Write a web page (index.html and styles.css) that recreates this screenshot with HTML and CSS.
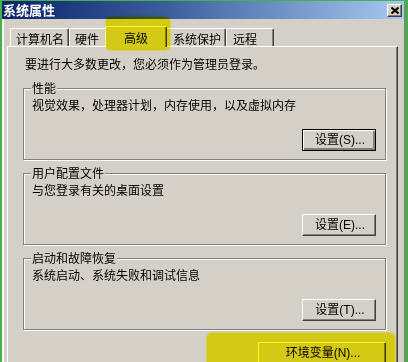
FILE: index.html
```html
<!DOCTYPE html>
<html lang="zh-CN">
<head>
<meta charset="utf-8">
<title>系统属性</title>
<link rel="stylesheet" href="styles.css">
</head>
<body>
<div class="frame">
  <div class="window">
    <div class="titlebar">
      <span class="title">系统属性</span>
      <span class="close"><svg width="8" height="7" viewBox="0 0 8 7"><path d="M0.5 0.5 L7.5 6.5 M7.5 0.5 L0.5 6.5" stroke="#000" stroke-width="2" fill="none"/></svg></span>
    </div>
    <div class="body">
      <div class="tabs">
        <div class="tab t1">计算机名</div>
        <div class="tab t2">硬件</div>
        <div class="tab sel">高级</div>
        <div class="tab t3">系统保护</div>
        <div class="tab t4">远程</div>
      </div>
      <div class="panel">
        <p class="note">要进行大多数更改，您必须作为管理员登录。</p>
        <div class="group">
          <div class="group-label">性能</div>
          <p class="desc">视觉效果，处理器计划，内存使用，以及虚拟内存</p>
          <div class="actions"><button class="btn focus">设置(S)...</button></div>
        </div>
        <div class="group">
          <div class="group-label">用户配置文件</div>
          <p class="desc">与您登录有关的桌面设置</p>
          <div class="actions"><button class="btn">设置(E)...</button></div>
        </div>
        <div class="group">
          <div class="group-label">启动和故障恢复</div>
          <p class="desc">系统启动、系统失败和调试信息</p>
          <div class="actions"><button class="btn">设置(T)...</button></div>
        </div>
        <div class="env-row"><button class="btn env">环境变量(N)...</button></div>
      </div>
    </div>
  </div>
  <div class="hl hl-tab"></div>
  <div class="hl hl-env"></div>
</div>
</body>
</html>
```

FILE: styles.css
```css
* { box-sizing: border-box; }
html, body { margin: 0; padding: 0; }
body {
  font-family: "Liberation Sans", "Noto Sans CJK SC", sans-serif;
  font-size: 12px;
  line-height: 14px;
  color: #000;
  background: #46b04c;
}
.frame {
  position: relative;
  width: 408px;
  height: 362px;
  overflow: hidden;
  padding: 1px 3px 0 2px;
  background: #46b04c;
  isolation: isolate;
}
.window {
  height: 100%;
  background: #d4d0c8;
  border-right: 1px solid #808080;
  display: flex;
  flex-direction: column;
}
.titlebar {
  height: 18px;
  flex: none;
  display: flex;
  align-items: center;
  justify-content: space-between;
  padding: 0 2px 0 1px;
  background: linear-gradient(to right, #0a246a 0%, #3a5c9c 40%, #a6caf0 100%);
}
.title {
  color: #fff;
  font-family: "Noto Sans CJK SC", sans-serif;
  font-weight: bold;
  font-size: 13px;
  line-height: 16px;
}
.close {
  width: 15px;
  height: 13px;
  display: flex;
  align-items: center;
  justify-content: center;
  background: #d4d0c8;
  border: 1px solid;
  border-color: #fff #404040 #404040 #fff;
  box-shadow: inset -1px -1px 0 #808080;
}
.body {
  flex: 1;
  border-left: 2px solid #fff;
  padding: 7px 6px 0 3px;
  overflow: hidden;
}
.tabs {
  display: flex;
  align-items: flex-end;
  height: 20px;
  padding-left: 3px;
  position: relative;
  z-index: 1;
}
.tab {
  height: 18px;
  padding: 3px 0 0 5px;
  border-top: 1px solid #fff;
  border-left: 1px solid #fff;
  border-right: 1px solid #404040;
  box-shadow: inset -1px 0 0 #808080;
  border-radius: 2px 2px 0 0;
  background: #d4d0c8;
  white-space: nowrap;
  font-family: "Noto Sans CJK SC", sans-serif;
}
.t1 { width: 59px; }
.t2 { width: 38px; }
.t3 { width: 61px; padding-left: 7px; }
.t4 { width: 48px; padding-left: 6px; }
.sel {
  width: 62px;
  height: 21px;
  margin: 0 -2px -1px;
  padding: 4px 0 0 0;
  text-align: center;
  position: relative;
  z-index: 2;
}
.panel {
  height: 400px;
  border: 1px solid;
  border-color: #fff #404040 #404040 #fff;
  box-shadow: inset -1px 0 0 #808080;
  padding: 10px 11px 0 15px;
}
p { margin: 0; }
.note {
  margin-left: 2px;
  font-family: "Noto Sans CJK SC", sans-serif;
}
.group {
  margin-top: 17px;
  border: 1px solid #808080;
  box-shadow: 1px 1px 0 #fff, inset 1px 1px 0 #fff;
  padding: 0 9px 8px 8px;
}
.group + .group { margin-top: 13px; }
.group-label {
  width: max-content;
  margin: -8px 0 0 -1px;
  padding: 0 1px;
  background: #d4d0c8;
  font-family: "Noto Sans CJK SC", sans-serif;
}
.desc {
  margin-top: 3px;
  font-family: "Noto Sans CJK SC", sans-serif;
}
.actions {
  display: flex;
  justify-content: flex-end;
  margin-top: 17px;
}
.btn {
  width: 74px;
  height: 22px;
  margin: 0;
  padding: 0 0 0 2px;
  font: inherit;
  font-size: 12px;
  color: #000;
  background: #d4d0c8;
  border: 1px solid;
  border-color: #fff #404040 #404040 #fff;
  box-shadow: inset -1px -1px 0 #808080;
  white-space: nowrap;
}
.btn.focus {
  border-color: #000;
  box-shadow: inset 1px 1px 0 #fff, inset -2px -2px 0 #808080;
}
.env-row {
  display: flex;
  justify-content: flex-end;
  margin-top: 12px;
}
.btn.env { width: 128px; }
.hl {
  position: absolute;
  z-index: 10;
  background: #fff81c;
  mix-blend-mode: multiply;
  border-radius: 5px;
  box-shadow: 0 0 2px 1px rgba(255, 248, 28, 0.6);
  pointer-events: none;
}
.hl-tab { left: 106px; top: 17px; width: 64px; height: 33px; }
.hl-env { left: 207px; top: 333px; width: 188px; height: 40px; }
```
